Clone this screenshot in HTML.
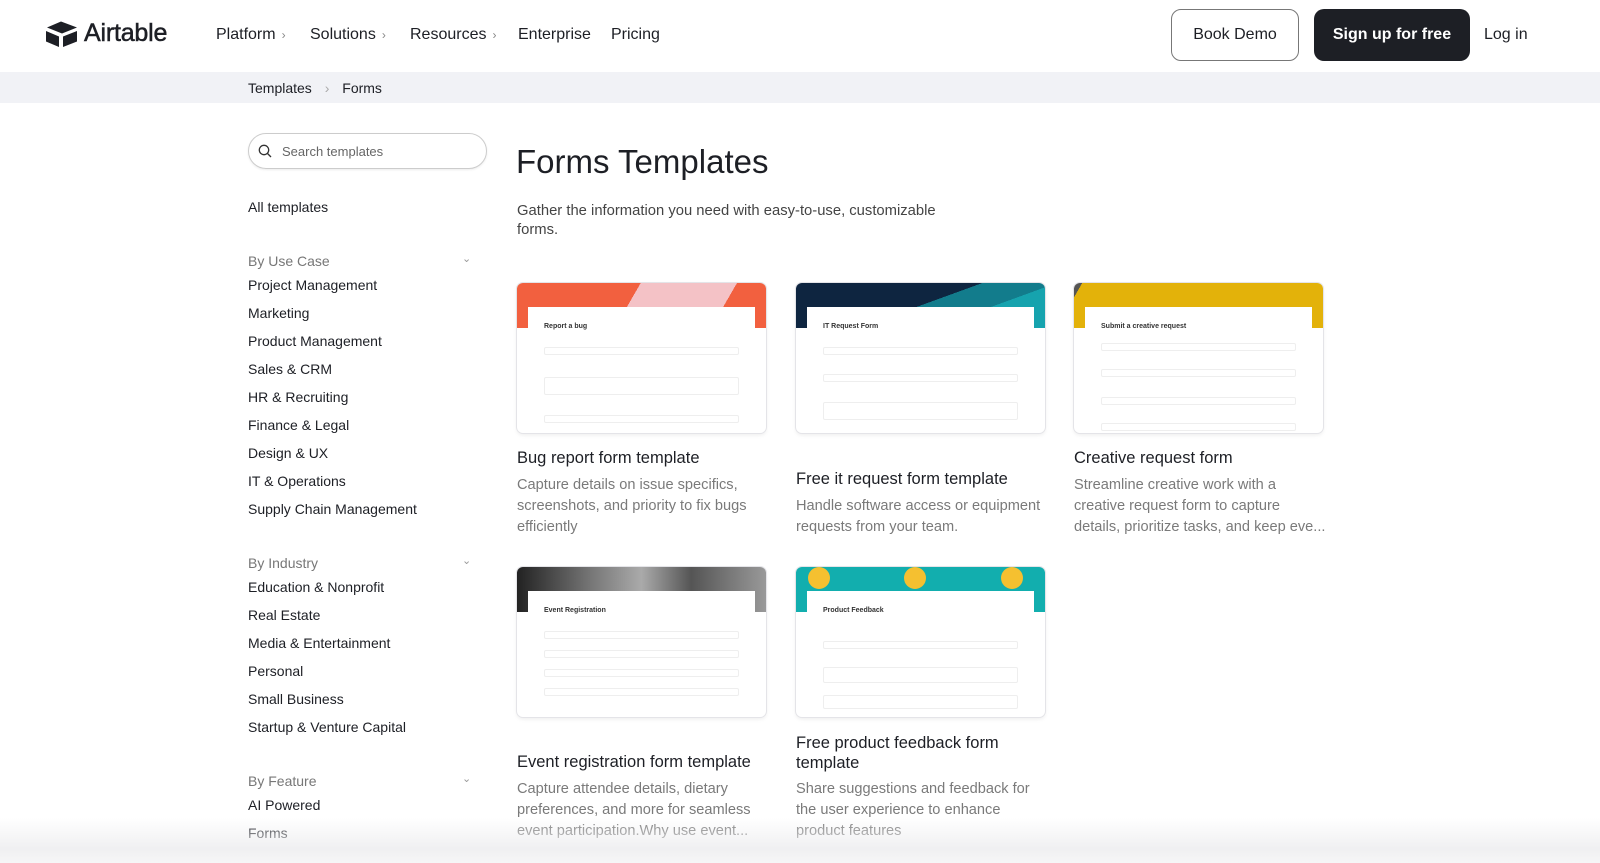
<!DOCTYPE html>
<html><head><meta charset="utf-8"><style>
*{margin:0;padding:0;box-sizing:border-box}
body{width:1600px;height:863px;overflow:hidden;background:#fff;font-family:"Liberation Sans",Arial,sans-serif;color:#1d1f25;position:relative}
.a{position:absolute;white-space:nowrap}
.nav{font-size:16px;top:26px}
.chev{color:#888;font-size:12px;margin-left:6px}
.side{left:248px;font-size:14px}
.hd{left:248px;font-size:14px;color:#777}
.card{position:absolute;width:249px;height:150px;border-radius:6px;overflow:hidden;box-shadow:0 0 0 1px #e4e4e8,0 2px 4px rgba(0,0,0,.08);background:#fff}
.card .bn{position:absolute;left:0;top:0;width:100%;height:45px}
.card .fm{position:absolute;left:11px;right:11px;top:24px;bottom:0;background:#fff}
.card .fm b{position:absolute;left:16px;top:16px;font-size:7px;color:#333}
.card .fm i{position:absolute;left:16px;right:16px;height:8px;border:1px solid #eee;border-radius:2px}
.ct{font-size:16.5px;color:#1d1f25}
.cd{font-size:14.6px;color:#7a7a7a;line-height:21px;white-space:normal;width:252px}
</style></head><body>
<svg class="a" style="left:46px;top:21px" width="32" height="27" viewBox="0 0 32 27"><path d="M15 0.5L31 6.5L16 12.5L1 6.5Z" fill="#1d1f25"/><path d="M0 10L13 15.5V26L0 20.5Z" fill="#1d1f25"/><path d="M17 15.5L31 10V20.5L17 26Z" fill="#1d1f25"/></svg>
<div class="a" style="left:84px;top:19px;font-size:25px;-webkit-text-stroke:0.5px #1d1f25;letter-spacing:-0.2px">Airtable</div>
<div class="a nav" style="left:216px">Platform<span class="chev">›</span></div>
<div class="a nav" style="left:310px">Solutions<span class="chev">›</span></div>
<div class="a nav" style="left:410px">Resources<span class="chev">›</span></div>
<div class="a nav" style="left:518px">Enterprise</div>
<div class="a nav" style="left:611px">Pricing</div>
<div class="a" style="left:1171px;top:9px;width:128px;height:52px;border:1px solid #777;border-radius:10px;font-size:16px;text-align:center;line-height:50px">Book Demo</div>
<div class="a" style="left:1314px;top:9px;width:156px;height:52px;background:#1d1f25;border-radius:10px;color:#fff;font-size:16px;font-weight:bold;text-align:center;line-height:52px">Sign up for free</div>
<div class="a nav" style="left:1484px">Log in</div>
<div class="a" style="left:0;top:72px;width:1600px;height:31px;background:#f1f2f6"></div>
<div class="a" style="left:248px;top:80px;font-size:14px">Templates <span style="color:#aaa;margin:0 9px">›</span> Forms</div>
<div class="a" style="left:248px;top:133px;width:239px;height:36px;border:1px solid #ccc;border-radius:18px;box-shadow:0 1px 2px rgba(0,0,0,.08)"></div>
<svg class="a" style="left:258px;top:144px" width="14" height="14" viewBox="0 0 14 14"><circle cx="6" cy="6" r="4.7" fill="none" stroke="#333" stroke-width="1.3"/><path d="M9.5 9.5L13 13" stroke="#333" stroke-width="1.3"/></svg>
<div class="a" style="left:282px;top:144px;font-size:13px;color:#666">Search templates</div>
<div class="a side" style="top:199px">All templates</div>
<div class="a hd" style="top:253px">By Use Case</div><div class="a" style="left:462px;top:252px;color:#999;font-size:11px">&#8964;</div>
<div class="a side" style="top:277px">Project Management</div>
<div class="a side" style="top:305px">Marketing</div>
<div class="a side" style="top:333px">Product Management</div>
<div class="a side" style="top:361px">Sales &amp; CRM</div>
<div class="a side" style="top:389px">HR &amp; Recruiting</div>
<div class="a side" style="top:417px">Finance &amp; Legal</div>
<div class="a side" style="top:445px">Design &amp; UX</div>
<div class="a side" style="top:473px">IT &amp; Operations</div>
<div class="a side" style="top:501px">Supply Chain Management</div>
<div class="a hd" style="top:555px">By Industry</div><div class="a" style="left:462px;top:554px;color:#999;font-size:11px">&#8964;</div>
<div class="a side" style="top:579px">Education &amp; Nonprofit</div>
<div class="a side" style="top:607px">Real Estate</div>
<div class="a side" style="top:635px">Media &amp; Entertainment</div>
<div class="a side" style="top:663px">Personal</div>
<div class="a side" style="top:691px">Small Business</div>
<div class="a side" style="top:719px">Startup &amp; Venture Capital</div>
<div class="a hd" style="top:773px">By Feature</div><div class="a" style="left:462px;top:772px;color:#999;font-size:11px">&#8964;</div>
<div class="a side" style="top:797px">AI Powered</div>
<div class="a side" style="top:825px">Forms</div>
<div class="a" style="left:516px;top:143px;font-size:33px">Forms Templates</div>
<div class="a" style="left:517px;top:202px;font-size:14.8px;color:#444;line-height:19px;white-space:normal;width:450px">Gather the information you need with easy-to-use, customizable forms.</div>

<div class="card" style="left:517px;top:283px"><div class="bn" style="background:linear-gradient(120deg,#f2603f 0 45%,#f4c2c6 45% 80%,#f2603f 80%)"></div><div class="fm"><b>Report a bug</b><i style="top:40px"></i><i style="top:70px;height:18px"></i><i style="top:108px"></i></div></div>
<div class="card" style="left:796px;top:283px"><div class="bn" style="background:linear-gradient(160deg,#0e2540 0 50%,#127c8c 50% 70%,#16a3ae 70%)"></div><div class="fm"><b>IT Request Form</b><i style="top:40px"></i><i style="top:67px"></i><i style="top:95px;height:18px"></i></div></div>
<div class="card" style="left:1074px;top:283px"><div class="bn" style="background:linear-gradient(120deg,#555 0 3%,#e3b20a 3%)"></div><div class="fm"><b>Submit a creative request</b><i style="top:36px"></i><i style="top:62px"></i><i style="top:90px"></i><i style="top:116px"></i></div></div>
<div class="a ct" style="left:517px;top:449px">Bug report form template</div>
<div class="a cd" style="left:517px;top:475px">Capture details on issue specifics, screenshots, and priority to fix bugs efficiently</div>
<div class="a ct" style="left:796px;top:470px">Free it request form template</div>
<div class="a cd" style="left:796px;top:496px">Handle software access or equipment requests from your team.</div>
<div class="a ct" style="left:1074px;top:449px">Creative request form</div>
<div class="a cd" style="left:1074px;top:475px">Streamline creative work with a<br>creative request form to capture<br>details, prioritize tasks, and keep eve...</div>

<div class="card" style="left:517px;top:567px"><div class="bn" style="background:linear-gradient(90deg,#222,#777 30%,#aaa 50%,#555 70%,#999)"></div><div class="fm"><b>Event Registration</b><i style="top:40px"></i><i style="top:59px"></i><i style="top:78px"></i><i style="top:97px"></i></div></div>
<div class="card" style="left:796px;top:567px"><div class="bn" style="background:#12aeae"></div><div class="a" style="left:12px;top:0;width:22px;height:22px;border-radius:50%;background:#f5c030"></div><div class="a" style="left:108px;top:0;width:22px;height:22px;border-radius:50%;background:#f5c030"></div><div class="a" style="left:205px;top:0;width:22px;height:22px;border-radius:50%;background:#f5c030"></div><div class="fm"><b>Product Feedback</b><i style="top:50px"></i><i style="top:76px;height:16px"></i><i style="top:104px;height:14px"></i></div></div>
<div class="a ct" style="left:517px;top:753px">Event registration form template</div>
<div class="a cd" style="left:517px;top:779px">Capture attendee details, dietary preferences, and more for seamless event participation.Why use event...</div>
<div class="a ct" style="left:796px;top:733px;white-space:normal;width:240px;line-height:20px">Free product feedback form template</div>
<div class="a cd" style="left:796px;top:779px;width:245px">Share suggestions and feedback for the user experience to enhance product features</div>

<div class="a" style="left:0;top:818px;width:1600px;height:45px;background:linear-gradient(180deg,rgba(255,255,255,0),rgba(238,238,240,.9) 70%,#f6f6f7)"></div>
</body></html>
